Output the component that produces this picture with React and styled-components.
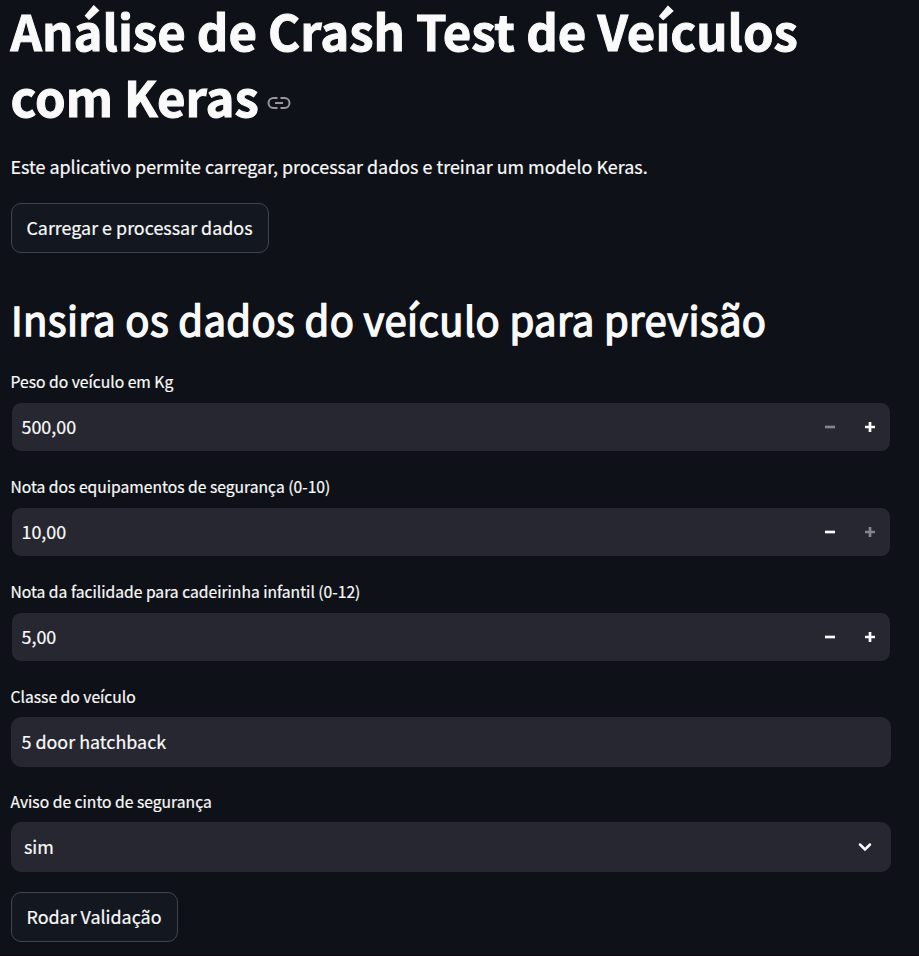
import React from "react";
import styled, { createGlobalStyle } from "styled-components";

const Global = createGlobalStyle`
  * { box-sizing: border-box; }
  html { background: #0e1117; }
  body { margin: 0; background: #0e1117; color: #fafafa; font-family: "Noto Sans CJK JP", "Noto Sans", sans-serif; -webkit-text-stroke: 0.2px #fafafa; }
`;

const Page = styled.main`
  height: 956px;
  padding: 0 28px 0 11px;
  display: flex;
  flex-direction: column;
  align-items: flex-start;
  border-bottom: 1px solid #10040f;
`;

const Title = styled.h1`
  margin: -3px 0 0 -0.5px;
  font-size: 49.1px;
  line-height: 66px;
  font-weight: 700;
  white-space: nowrap;
  -webkit-text-stroke: 1px #fafafa;
`;

const TitleLine = styled.span`
  display: flex;
  align-items: center;
`;

const LinkIcon = styled.svg`
  margin: 14px 0 0 8.5px;
  width: 24px;
  height: 24px;
`;

const Intro = styled.p`
  margin: 22px 0 22px -0.5px;
  font-size: 17.9px;
  line-height: 30px;
  white-space: nowrap;
`;

const Button = styled.button`
  width: ${(p) => p.$width}px;
  height: 50px;
  flex: none;
  padding: 0 1px 2px 0;
  border: 1px solid #41444c;
  border-radius: 10px;
  background: #131720;
  color: #fafafa;
  font: 17.9px "Noto Sans CJK JP", sans-serif;
  white-space: nowrap;
`;

const Subtitle = styled.h2`
  margin: 39px 0 24px;
  font-size: 40px;
  line-height: 54px;
  font-weight: 400;
  letter-spacing: 0.36px;
  white-space: nowrap;
  -webkit-text-stroke: 1.4px #fafafa;
`;

const Fields = styled.div`
  display: grid;
  grid-auto-rows: 105px;
  width: 880px;
  height: 522px;
`;

const Label = styled.label`
  display: block;
  height: 32px;
  margin-left: -0.5px;
  font-size: 15.67px;
  line-height: 24px;
`;

const Control = styled.div`
  display: flex;
  align-items: center;
  height: 50px;
  padding-left: ${(p) => p.$inset || 9.5}px;
  border: 1px solid ${(p) => (p.$outlined ? "#0e1117" : "#262730")};
  border-radius: 10px;
  background: #262730;
  font-size: 17.9px;
`;

const Value = styled.span`
  flex: 1;
  margin-top: -2px;
`;

const Step = styled.span`
  width: 40px;
  height: 48px;
  display: grid;
  place-items: center;
  color: ${(p) => (p.$off ? "#83848f" : "#fafafa")};
`;

const Chevron = styled.svg`
  width: 14px;
  height: 10px;
  margin-right: 18px;
`;

const Glyph = ({ plus }) => (
  <svg width="12" height="12" viewBox="0 0 12 12" stroke="currentColor" strokeWidth="2.7">
    <path d={plus ? "M1 6H11M6 1V11" : "M1 6H11"} />
  </svg>
);

const NumberField = ({ label, value, minusOff, plusOff }) => (
  <div>
    <Label>{label}</Label>
    <Control $outlined>
      <Value>{value}</Value>
      <Step $off={minusOff}><Glyph /></Step>
      <Step $off={plusOff}><Glyph plus /></Step>
    </Control>
  </div>
);

export default function App() {
  return (
    <>
      <Global />
      <Page>
        <Title>
          <TitleLine>Análise de Crash Test de Veículos</TitleLine>
          <TitleLine>
            com Keras
            <LinkIcon viewBox="0 0 24 24" fill="none" stroke="#95979b" strokeWidth="2">
              <path d="M10.5 7H6.5a5 5 0 0 0 0 10h4M13.5 7h4a5 5 0 0 1 0 10h-4M8 12h8" />
            </LinkIcon>
          </TitleLine>
        </Title>
        <Intro>Este aplicativo permite carregar, processar dados e treinar um modelo Keras.</Intro>
        <Button $width={258}>Carregar e processar dados</Button>
        <Subtitle>Insira os dados do veículo para previsão</Subtitle>
        <Fields>
          <NumberField label="Peso do veículo em Kg" value="500,00" minusOff />
          <NumberField label="Nota dos equipamentos de segurança (0-10)" value="10,00" plusOff />
          <NumberField label="Nota da facilidade para cadeirinha infantil (0-12)" value="5,00" />
          <div>
            <Label>Classe do veículo</Label>
            <Control><Value>5 door hatchback</Value></Control>
          </div>
          <div>
            <Label>Aviso de cinto de segurança</Label>
            <Control $inset={12}>
              <Value>sim</Value>
              <Chevron viewBox="0 0 14 10" fill="none" stroke="#fafafa" strokeWidth="2.5" strokeLinecap="round">
                <path d="M2 2.5L7 7.5L12 2.5" />
              </Chevron>
            </Control>
          </div>
        </Fields>
        <Button $width={167}>Rodar Validação</Button>
      </Page>
    </>
  );
}
